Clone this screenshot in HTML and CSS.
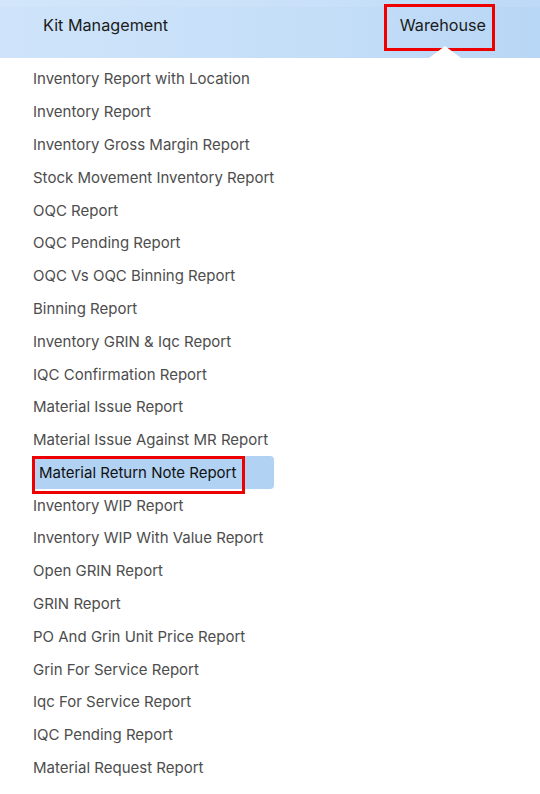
FILE: index.html
```html
<!DOCTYPE html>
<html lang="en">
<head>
<meta charset="utf-8">
<title>Warehouse Reports</title>
<link rel="stylesheet" href="styles.css">
</head>
<body>
<header class="topbar">
  <div class="nav-item">Kit Management</div>
  <div class="nav-item nav-active">
    <span class="nav-label">Warehouse</span>
    <span class="caret"></span>
  </div>
</header>
<ul class="menu">
  <li class="menu-item">Inventory Report with Location</li>
  <li class="menu-item">Inventory Report</li>
  <li class="menu-item">Inventory Gross Margin Report</li>
  <li class="menu-item">Stock Movement Inventory Report</li>
  <li class="menu-item">OQC Report</li>
  <li class="menu-item">OQC Pending Report</li>
  <li class="menu-item">OQC Vs OQC Binning Report</li>
  <li class="menu-item">Binning Report</li>
  <li class="menu-item">Inventory GRIN &amp; Iqc Report</li>
  <li class="menu-item">IQC Confirmation Report</li>
  <li class="menu-item">Material Issue Report</li>
  <li class="menu-item">Material Issue Against MR Report</li>
  <li class="menu-item menu-selected"><span class="sel-label">Material Return Note Report</span><span class="mark"></span></li>
  <li class="menu-item">Inventory WIP Report</li>
  <li class="menu-item">Inventory WIP With Value Report</li>
  <li class="menu-item">Open GRIN Report</li>
  <li class="menu-item">GRIN Report</li>
  <li class="menu-item">PO And Grin Unit Price Report</li>
  <li class="menu-item">Grin For Service Report</li>
  <li class="menu-item">Iqc For Service Report</li>
  <li class="menu-item">IQC Pending Report</li>
  <li class="menu-item">Material Request Report</li>
</ul>
</body>
</html>
```
FILE: styles.css
```css
* { box-sizing: border-box; }
html, body { margin: 0; padding: 0; background: #ffffff; }
body {
  font-family: Inter, "Noto Sans", "Liberation Sans", sans-serif;
  width: 540px;
  height: 794px;
  overflow: hidden;
}
.topbar {
  height: 58px;
  display: flex;
  align-items: flex-start;
  padding: 0 45px 0 43px;
  background:
    linear-gradient(180deg, rgba(255,255,255,0.08) 0, rgba(255,255,255,0.08) 7px, rgba(255,255,255,0) 7px),
    linear-gradient(90deg, #cfe4fa 0%, #c4def8 60%, #b8d6f5 100%);
}
.nav-item {
  font-size: 16.2px;
  line-height: 20px;
  color: #1b1b1b;
  padding-top: 14.8px;
}
.nav-active {
  margin-left: auto;
  position: relative;
  margin-top: 4px;
  height: 47px;
  border: 3px solid #ee0000;
  padding: 7.8px 6px 0 13px;
}
.caret {
  position: absolute;
  left: 42px;
  bottom: -10px;
  width: 0;
  height: 0;
  border-left: 16px solid transparent;
  border-right: 16px solid transparent;
  border-bottom: 12px solid #ffffff;
}
.menu {
  list-style: none;
  margin: 0;
  padding: 4.6px 0 0 33px;
}
.menu-item {
  height: 32.8px;
  display: flex;
  align-items: center;
  font-size: 15px;
  color: #4d4d4d;
}
.menu-selected {
  position: relative;
  width: 241px;
  height: 32.6px;
  background: #b1d2f3;
  border-radius: 0 4px 4px 0;
  color: #111111;
  padding-left: 6px;
}
.mark {
  position: absolute;
  left: -1px;
  top: 0;
  width: 213px;
  height: 38px;
  border: 3px solid #ee0000;
}
```
